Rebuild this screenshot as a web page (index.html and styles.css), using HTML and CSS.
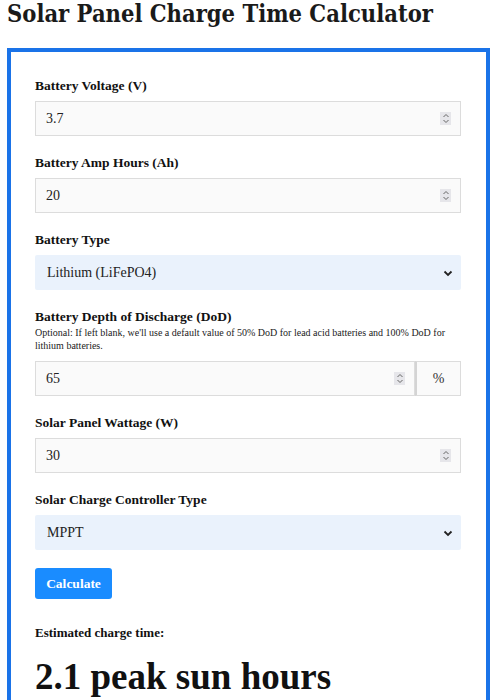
FILE: index.html
```html
<!DOCTYPE html>
<html>
<head>
    <link rel="stylesheet" href="styles.css">
</head>
<body>
    <h1 class="title">Solar Panel Charge Time Calculator</h1>
    <div class="calc">
        <div class="field">
            <label for="voltage">Battery Voltage (V)</label>
            <div class="control">
                <input type="number" id="voltage" value="3.7">
                <span class="spin"><svg width="8" height="11" viewBox="0 0 8 11"><path d="M1.5 4 L4 1.5 L6.5 4 M1.5 7 L4 9.5 L6.5 7" fill="none" stroke="#666" stroke-width="1"/></svg></span>
            </div>
        </div>
        <div class="field">
            <label for="ah">Battery Amp Hours (Ah)</label>
            <div class="control">
                <input type="number" id="ah" value="20">
                <span class="spin"><svg width="8" height="11" viewBox="0 0 8 11"><path d="M1.5 4 L4 1.5 L6.5 4 M1.5 7 L4 9.5 L6.5 7" fill="none" stroke="#666" stroke-width="1"/></svg></span>
            </div>
        </div>
        <div class="field">
            <label for="type">Battery Type</label>
            <div class="control">
                <select id="type">
                    <option>Lithium (LiFePO4)</option>
                    <option>Lead Acid</option>
                </select>
                <svg class="chev" width="10" height="8" viewBox="0 0 10 8"><path d="M1.5 2.5 L5 6 L8.5 2.5" fill="none" stroke="#222" stroke-width="1.8"/></svg>
            </div>
        </div>
        <div class="field">
            <label for="dod">Battery Depth of Discharge (DoD)</label>
            <p class="hint">Optional: If left blank, we'll use a default value of 50% DoD for lead acid batteries and 100% DoD for lithium batteries.</p>
            <div class="group">
                <div class="control">
                    <input type="number" id="dod" value="65">
                    <span class="spin"><svg width="8" height="11" viewBox="0 0 8 11"><path d="M1.5 4 L4 1.5 L6.5 4 M1.5 7 L4 9.5 L6.5 7" fill="none" stroke="#666" stroke-width="1"/></svg></span>
                </div>
                <span class="addon">%</span>
            </div>
        </div>
        <div class="field">
            <label for="watt">Solar Panel Wattage (W)</label>
            <div class="control">
                <input type="number" id="watt" value="30">
                <span class="spin"><svg width="8" height="11" viewBox="0 0 8 11"><path d="M1.5 4 L4 1.5 L6.5 4 M1.5 7 L4 9.5 L6.5 7" fill="none" stroke="#666" stroke-width="1"/></svg></span>
            </div>
        </div>
        <div class="field">
            <label for="ctrl">Solar Charge Controller Type</label>
            <div class="control">
                <select id="ctrl">
                    <option>MPPT</option>
                    <option>PWM</option>
                </select>
                <svg class="chev" width="10" height="8" viewBox="0 0 10 8"><path d="M1.5 2.5 L5 6 L8.5 2.5" fill="none" stroke="#222" stroke-width="1.8"/></svg>
            </div>
        </div>
        <button class="btn">Calculate</button>
        <p class="result-label">Estimated charge time:</p>
        <p class="result">2.1 peak sun hours</p>
    </div>
</body>
</html>
```

FILE: styles.css
```css
body {
    margin: 0 7px;
    font-family: "Liberation Serif", serif;
    color: #111;
    background: #fff;
}
.title {
    font-family: "DejaVu Serif", serif;
    font-stretch: condensed;
    font-size: 23.5px;
    font-weight: bold;
    white-space: nowrap;
    margin: 0;
    height: 48px;
    line-height: 29px;
    color: #1a1a1a;
}
.calc {
    border: 4px solid #1a73e8;
    border-bottom: none;
    padding: 24px 25px 20px 24px;
}
.field {
    margin-bottom: 18px;
}
.field label {
    display: block;
    font-size: 13.5px;
    font-weight: bold;
    line-height: 18px;
    margin-bottom: 6px;
    margin-top: 1px;
}
.hint {
    font-size: 10px;
    line-height: 13px;
    margin: -6px 0 9px;
    color: #222;
}
.control {
    position: relative;
    flex: 1;
}
input[type="number"], select {
    display: block;
    width: 100%;
    height: 35px;
    box-sizing: border-box;
    border: 1px solid #dcdcdc;
    background: #fafafa;
    font-family: "Liberation Serif", serif;
    font-size: 14px;
    color: #222;
    padding: 0 10px;
    margin: 0;
    outline: none;
    -moz-appearance: textfield;
}
input::-webkit-inner-spin-button,
input::-webkit-outer-spin-button {
    -webkit-appearance: none;
    margin: 0;
}
select {
    -webkit-appearance: none;
    appearance: none;
    border: none;
    background: #eaf2fc;
    padding: 0 12px;
    border-radius: 2px;
}
.spin {
    position: absolute;
    right: 10px;
    top: 11px;
    width: 11px;
    height: 13px;
    background: #e6e6ea;
    display: flex;
    align-items: center;
    justify-content: center;
}
.chev {
    position: absolute;
    right: 8px;
    top: 14px;
}
.group {
    display: flex;
}
.addon {
    width: 46px;
    height: 35px;
    box-sizing: border-box;
    border: 1px solid #dcdcdc;
    border-left: 2px solid #d4d4d4;
    background: #fafafa;
    display: flex;
    align-items: center;
    justify-content: center;
    font-size: 14px;
    color: #333;
}
.btn {
    display: block;
    background: #1a8cff;
    color: #fff;
    border: none;
    border-radius: 3px;
    font-family: "Liberation Serif", serif;
    font-weight: bold;
    font-size: 13.5px;
    width: 77px;
    height: 31px;
    margin: 0 0 25px;
    cursor: pointer;
}
.result-label {
    font-size: 13px;
    font-weight: bold;
    margin: 0 0 14px;
    line-height: 18px;
}
.result {
    font-size: 37px;
    font-weight: bold;
    margin: 0;
    line-height: 42px;
}
```
